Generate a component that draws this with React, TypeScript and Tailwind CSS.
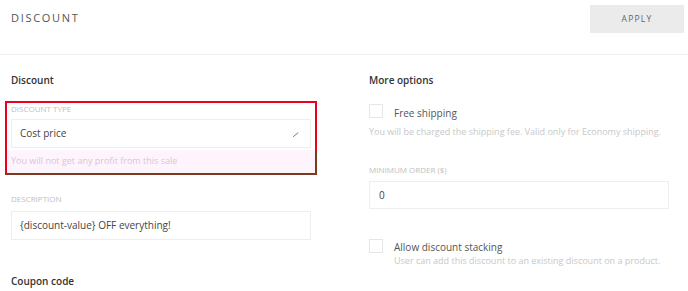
import React from 'react';

function Checkbox() {
  return <span className="block h-[14px] w-[14px] shrink-0 border border-[#e6e6e6] bg-white" />;
}

function FieldLabel({ children, className = '' }: { children: React.ReactNode; className?: string }) {
  return (
    <div className={`text-[8px] leading-[11px] uppercase text-[#c0c0c0] ${className}`}>{children}</div>
  );
}

export default function App() {
  return (
    <div className="w-[688px] h-[291px] overflow-hidden bg-white font-['Open_Sans',sans-serif]">
      <div className="flex justify-between h-[55px] border-b border-[#f0f0f0] pl-[11px] pr-[4px]">
        <h1 className="mt-[10px] text-[11px] leading-[16px] tracking-[1.7px] text-[#555]">DISCOUNT</h1>
        <button
          type="button"
          className="mt-[5px] h-[28px] w-[94px] bg-[#ebebeb] text-[8.5px] tracking-[1.2px] text-[#666]"
        >
          APPLY
        </button>
      </div>

      <div className="flex gap-[58px] pl-[11px] pt-[18px]">
        {/* left column */}
        <div className="w-[300px]">
          <h2 className="text-[10px] leading-[14px] font-semibold text-[#333]">Discount</h2>

          <div className="relative mt-[16px]">
            {/* annotation box */}
            <div className="absolute left-[-6px] top-[-2px] w-[312px] h-[74px] pointer-events-none">
              <div className="absolute left-[2px] right-[2px] top-[49px] bottom-[2px] bg-[#fef4fd]" />
              <div className="absolute inset-0 border-2 border-[#ec0020]" />
              <div className="absolute left-0 right-0 bottom-0 h-[2px] bg-[#7b3a1e]" />
              <div className="absolute right-0 top-[51px] bottom-0 w-[2px] bg-[#7b3a1e]" />
            </div>

            <div className="relative">
              <FieldLabel className="mb-[5px]">Discount type</FieldLabel>
              <div className="flex items-center justify-between h-[29px] border border-[#eeeeee] bg-white pl-[8px] pr-[11px]">
                <span className="text-[10px] text-[#444]">Cost price</span>
                <svg width="6" height="5" viewBox="0 0 6 5" className="mt-[2px]">
                  <path d="M0.5 4.5 L5 0.8" stroke="#777" strokeWidth="1" strokeLinecap="round" />
                </svg>
              </div>
              <div className="mt-[7px] text-[9px] leading-[12px] text-[#d9c6d4]">
                You will not get any profit from this sale
              </div>
            </div>
          </div>

          <FieldLabel className="mt-[26px] mb-[7px]">Description</FieldLabel>
          <div className="flex items-center h-[29px] border border-[#eeeeee] pl-[8px]">
            <span className="text-[10px] text-[#444]">{'{discount-value} OFF everything!'}</span>
          </div>

          <h2 className="mt-[34px] text-[10px] leading-[14px] font-semibold text-[#333]">Coupon code</h2>
        </div>

        {/* right column */}
        <div className="w-[300px]">
          <h2 className="text-[10px] leading-[14px] font-semibold text-[#333]">More options</h2>

          <div className="mt-[17px] flex items-start gap-[11px]">
            <Checkbox />
            <span className="mt-[2px] text-[10px] leading-[14px] text-[#555]">Free shipping</span>
          </div>
          <div className="mt-[6px] text-[9px] leading-[12px] text-[#c8c8c8]">
            You will be charged the shipping fee. Valid only for Economy shipping.
          </div>

          <FieldLabel className="mt-[26px] mb-[6px]">Minimum order ($)</FieldLabel>
          <div className="flex items-center h-[28px] border border-[#eeeeee] pl-[9px]">
            <span className="text-[10px] text-[#444]">0</span>
          </div>

          <div className="mt-[30px] flex items-start gap-[11px]">
            <Checkbox />
            <div className="mt-[1px]">
              <div className="text-[10px] leading-[14px] text-[#555]">Allow discount stacking</div>
              <div className="mt-[1px] text-[9px] leading-[12px] text-[#c8c8c8]">
                User can add this discount to an existing discount on a product.
              </div>
            </div>
          </div>
        </div>
      </div>
    </div>
  );
}
